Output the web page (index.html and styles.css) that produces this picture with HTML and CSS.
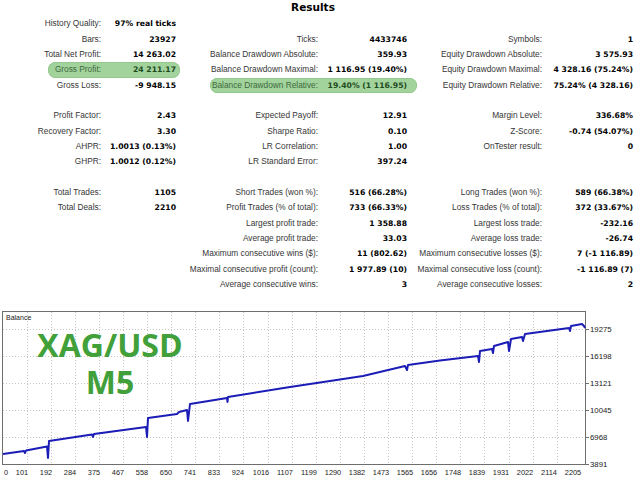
FILE: index.html
```html
<!DOCTYPE html>
<html>
<head>
<meta charset="utf-8">
<link rel="stylesheet" href="styles.css">
</head>
<body>
<div class="page">
  <div class="title">Results</div>
  <div class="stats">
    <div class="row">
      <div class="pair p1"><span class="lbl">History Quality:</span><span class="val">97% real ticks</span></div>
      <div class="pair p2"></div>
      <div class="pair p3"></div>
    </div>
    <div class="row">
      <div class="pair p1"><span class="lbl">Bars:</span><span class="val">23927</span></div>
      <div class="pair p2"><span class="lbl">Ticks:</span><span class="val">4433746</span></div>
      <div class="pair p3"><span class="lbl">Symbols:</span><span class="val">1</span></div>
    </div>
    <div class="row">
      <div class="pair p1"><span class="lbl">Total Net Profit:</span><span class="val">14 263.02</span></div>
      <div class="pair p2"><span class="lbl">Balance Drawdown Absolute:</span><span class="val">359.93</span></div>
      <div class="pair p3"><span class="lbl">Equity Drawdown Absolute:</span><span class="val">3 575.93</span></div>
    </div>
    <div class="row">
      <div class="pair p1 hl hl-gross"><span class="lbl">Gross Profit:</span><span class="val">24 211.17</span></div>
      <div class="pair p2"><span class="lbl">Balance Drawdown Maximal:</span><span class="val">1 116.95 (19.40%)</span></div>
      <div class="pair p3"><span class="lbl">Equity Drawdown Maximal:</span><span class="val">4 328.16 (75.24%)</span></div>
    </div>
    <div class="row">
      <div class="pair p1"><span class="lbl">Gross Loss:</span><span class="val">-9 948.15</span></div>
      <div class="pair p2 hl hl-bdr"><span class="lbl">Balance Drawdown Relative:</span><span class="val">19.40% (1 116.95)</span></div>
      <div class="pair p3"><span class="lbl">Equity Drawdown Relative:</span><span class="val">75.24% (4 328.16)</span></div>
    </div>
    <div class="row"></div>
    <div class="row">
      <div class="pair p1"><span class="lbl">Profit Factor:</span><span class="val">2.43</span></div>
      <div class="pair p2"><span class="lbl">Expected Payoff:</span><span class="val">12.91</span></div>
      <div class="pair p3"><span class="lbl">Margin Level:</span><span class="val">336.68%</span></div>
    </div>
    <div class="row">
      <div class="pair p1"><span class="lbl">Recovery Factor:</span><span class="val">3.30</span></div>
      <div class="pair p2"><span class="lbl">Sharpe Ratio:</span><span class="val">0.10</span></div>
      <div class="pair p3"><span class="lbl">Z-Score:</span><span class="val">-0.74 (54.07%)</span></div>
    </div>
    <div class="row">
      <div class="pair p1"><span class="lbl">AHPR:</span><span class="val">1.0013 (0.13%)</span></div>
      <div class="pair p2"><span class="lbl">LR Correlation:</span><span class="val">1.00</span></div>
      <div class="pair p3"><span class="lbl">OnTester result:</span><span class="val">0</span></div>
    </div>
    <div class="row">
      <div class="pair p1"><span class="lbl">GHPR:</span><span class="val">1.0012 (0.12%)</span></div>
      <div class="pair p2"><span class="lbl">LR Standard Error:</span><span class="val">397.24</span></div>
      <div class="pair p3"></div>
    </div>
    <div class="row"></div>
    <div class="row">
      <div class="pair p1"><span class="lbl">Total Trades:</span><span class="val">1105</span></div>
      <div class="pair p2"><span class="lbl">Short Trades (won %):</span><span class="val">516 (66.28%)</span></div>
      <div class="pair p3"><span class="lbl">Long Trades (won %):</span><span class="val">589 (66.38%)</span></div>
    </div>
    <div class="row">
      <div class="pair p1"><span class="lbl">Total Deals:</span><span class="val">2210</span></div>
      <div class="pair p2"><span class="lbl">Profit Trades (% of total):</span><span class="val">733 (66.33%)</span></div>
      <div class="pair p3"><span class="lbl">Loss Trades (% of total):</span><span class="val">372 (33.67%)</span></div>
    </div>
    <div class="row">
      <div class="pair p1"></div>
      <div class="pair p2"><span class="lbl">Largest profit trade:</span><span class="val">1 358.88</span></div>
      <div class="pair p3"><span class="lbl">Largest loss trade:</span><span class="val">-232.16</span></div>
    </div>
    <div class="row">
      <div class="pair p1"></div>
      <div class="pair p2"><span class="lbl">Average profit trade:</span><span class="val">33.03</span></div>
      <div class="pair p3"><span class="lbl">Average loss trade:</span><span class="val">-26.74</span></div>
    </div>
    <div class="row">
      <div class="pair p1"></div>
      <div class="pair p2"><span class="lbl">Maximum consecutive wins ($):</span><span class="val">11 (802.62)</span></div>
      <div class="pair p3"><span class="lbl">Maximum consecutive losses ($):</span><span class="val">7 (-1 116.89)</span></div>
    </div>
    <div class="row">
      <div class="pair p1"></div>
      <div class="pair p2"><span class="lbl">Maximal consecutive profit (count):</span><span class="val">1 977.89 (10)</span></div>
      <div class="pair p3"><span class="lbl">Maximal consecutive loss (count):</span><span class="val">-1 116.89 (7)</span></div>
    </div>
    <div class="row">
      <div class="pair p1"></div>
      <div class="pair p2"><span class="lbl">Average consecutive wins:</span><span class="val">3</span></div>
      <div class="pair p3"><span class="lbl">Average consecutive losses:</span><span class="val">2</span></div>
    </div>
  </div>

  <div class="chart">
    <svg class="chart-svg" width="640" height="187" viewBox="0 293 640 187">
      <g class="grid">
        <line x1="3" y1="330.5" x2="585" y2="330.5"/>
        <line x1="3" y1="357.5" x2="585" y2="357.5"/>
        <line x1="3" y1="384.5" x2="585" y2="384.5"/>
        <line x1="3" y1="411.5" x2="585" y2="411.5"/>
        <line x1="3" y1="438.5" x2="585" y2="438.5"/>
        <line x1="27.5" y1="313" x2="27.5" y2="465"/>
        <line x1="51.5" y1="313" x2="51.5" y2="465"/>
        <line x1="75.5" y1="313" x2="75.5" y2="465"/>
        <line x1="99.5" y1="313" x2="99.5" y2="465"/>
        <line x1="123.5" y1="313" x2="123.5" y2="465"/>
        <line x1="147.5" y1="313" x2="147.5" y2="465"/>
        <line x1="171.5" y1="313" x2="171.5" y2="465"/>
        <line x1="195.5" y1="313" x2="195.5" y2="465"/>
        <line x1="219.5" y1="313" x2="219.5" y2="465"/>
        <line x1="243.5" y1="313" x2="243.5" y2="465"/>
        <line x1="268.5" y1="313" x2="268.5" y2="465"/>
        <line x1="292.5" y1="313" x2="292.5" y2="465"/>
        <line x1="316.5" y1="313" x2="316.5" y2="465"/>
        <line x1="340.5" y1="313" x2="340.5" y2="465"/>
        <line x1="364.5" y1="313" x2="364.5" y2="465"/>
        <line x1="388.5" y1="313" x2="388.5" y2="465"/>
        <line x1="412.5" y1="313" x2="412.5" y2="465"/>
        <line x1="436.5" y1="313" x2="436.5" y2="465"/>
        <line x1="460.5" y1="313" x2="460.5" y2="465"/>
        <line x1="484.5" y1="313" x2="484.5" y2="465"/>
        <line x1="509.5" y1="313" x2="509.5" y2="465"/>
        <line x1="533.5" y1="313" x2="533.5" y2="465"/>
        <line x1="557.5" y1="313" x2="557.5" y2="465"/>
      </g>
      <rect class="frame" x="2.5" y="312.5" width="583" height="153"/>
      <g class="ticks">
        <line x1="585" y1="330.5" x2="589" y2="330.5"/>
        <line x1="585" y1="357.5" x2="589" y2="357.5"/>
        <line x1="585" y1="384.5" x2="589" y2="384.5"/>
        <line x1="585" y1="411.5" x2="589" y2="411.5"/>
        <line x1="585" y1="438.5" x2="589" y2="438.5"/>
        <line x1="585" y1="465.5" x2="589" y2="465.5"/>
      </g>
      <text class="ctitle" x="6" y="321">Balance</text>
      <g class="ylab">
        <text x="590" y="333">19275</text>
        <text x="590" y="360">16198</text>
        <text x="590" y="387">13121</text>
        <text x="590" y="414">10045</text>
        <text x="590" y="441">6968</text>
        <text x="590" y="468">3891</text>
      </g>
      <g class="xlab">
        <text x="6" y="476">0</text>
        <text x="22" y="476">101</text>
        <text x="46" y="476">192</text>
        <text x="70" y="476">284</text>
        <text x="94" y="476">375</text>
        <text x="118" y="476">467</text>
        <text x="142" y="476">558</text>
        <text x="166" y="476">650</text>
        <text x="190" y="476">741</text>
        <text x="214" y="476">833</text>
        <text x="238" y="476">924</text>
        <text x="261" y="476">1016</text>
        <text x="285" y="476">1107</text>
        <text x="309" y="476">1199</text>
        <text x="333" y="476">1290</text>
        <text x="357" y="476">1382</text>
        <text x="381" y="476">1473</text>
        <text x="405" y="476">1565</text>
        <text x="429" y="476">1656</text>
        <text x="453" y="476">1748</text>
        <text x="477" y="476">1839</text>
        <text x="501" y="476">1931</text>
        <text x="525" y="476">2022</text>
        <text x="549" y="476">2114</text>
        <text x="573" y="476">2205</text>
      </g>
      <polyline class="balance" points="3,455 24,452 25,454 26,451.5 47,447.5 48,459 49,442 92,435.5 93,438 94,435 146,428 147,438 148,419 177,415 179,413 187,411 188,422 190,405 227,399 227.5,403 228,398 290,388 320,383.5 363,377 405,367 407,371 408,366 440,361.5 478,357 479,363 480,352 492,350 493,354 494,347 508,343 509,352 511,340 522,338 523,342 525,335 569,329 570,332 571,327 582,325 584,327 585,329"/>
    </svg>
    <div class="watermark"><div class="wm-line">XAG/USD</div><div class="wm-line">M5</div></div>
  </div>
</div>
</body>
</html>
```

FILE: styles.css
```css
html, body {
  margin: 0;
  padding: 0;
  background: #ffffff;
}

.page {
  width: 640px;
  height: 480px;
  overflow: hidden;
  font-family: "Liberation Sans", Arial, sans-serif;
}

.title {
  height: 16.3px;
  line-height: 15px;
  font-family: "DejaVu Sans", sans-serif;
  font-weight: bold;
  font-size: 10.5px;
  text-align: center;
  width: 626px;
  color: #000;
}

.stats {
  display: flex;
  flex-direction: column;
}

.row {
  display: grid;
  grid-template-columns: 176px 231px 226px;
  height: 15.35px;
  line-height: 15.35px;
  white-space: nowrap;
}

.pair {
  display: grid;
}

.p1 { grid-template-columns: 101px 75px; }
.p2 { grid-template-columns: 142px 89px; }
.p3 { grid-template-columns: 135px 91px; }

.lbl {
  text-align: right;
  font-size: 8.3px;
  color: #363636;
}

.val {
  text-align: right;
  font-family: "DejaVu Sans", sans-serif;
  font-weight: bold;
  font-size: 7.7px;
  color: #000;
}

.hl {
  position: relative;
  isolation: isolate;
}

.hl::before {
  content: "";
  position: absolute;
  top: 0;
  bottom: 0;
  border-radius: 8px;
  background: #a2d39c;
  box-shadow: inset 0 0 0 0.5px #86c07f;
  z-index: -1;
}

.hl-gross::before { left: 48px; right: -4px; }
.hl-bdr::before { left: 34px; right: -10px; }

.hl .lbl { color: #3e6a3c; }
.hl .val { color: #1f4a1d; }

.chart {
  position: relative;
  height: 187px;
}

.chart-svg {
  display: block;
}

.grid line {
  stroke: #c4c4c4;
  stroke-width: 1;
  stroke-dasharray: 1 2;
}

.frame {
  fill: none;
  stroke: #6e6e6e;
  stroke-width: 1;
}

.ticks line {
  stroke: #6e6e6e;
  stroke-width: 1;
}

.ctitle {
  font-family: "Liberation Sans", Arial, sans-serif;
  font-size: 7px;
  fill: #222;
}

.ylab text {
  font-family: "Liberation Sans", Arial, sans-serif;
  font-size: 7.8px;
  fill: #222;
}

.xlab text {
  font-family: "Liberation Sans", Arial, sans-serif;
  font-size: 7.4px;
  fill: #222;
  text-anchor: middle;
}

.balance {
  fill: none;
  stroke: #1c1cb6;
  stroke-width: 2;
  stroke-linejoin: round;
}

.watermark {
  position: absolute;
  left: 30px;
  top: 36px;
  width: 160px;
  display: flex;
  flex-direction: column;
  align-items: center;
  font-family: "Open Sans", sans-serif;
  font-weight: bold;
  font-size: 32px;
  color: #41a03a;
}

.wm-line {
  height: 37px;
  line-height: 33px;
}
```
